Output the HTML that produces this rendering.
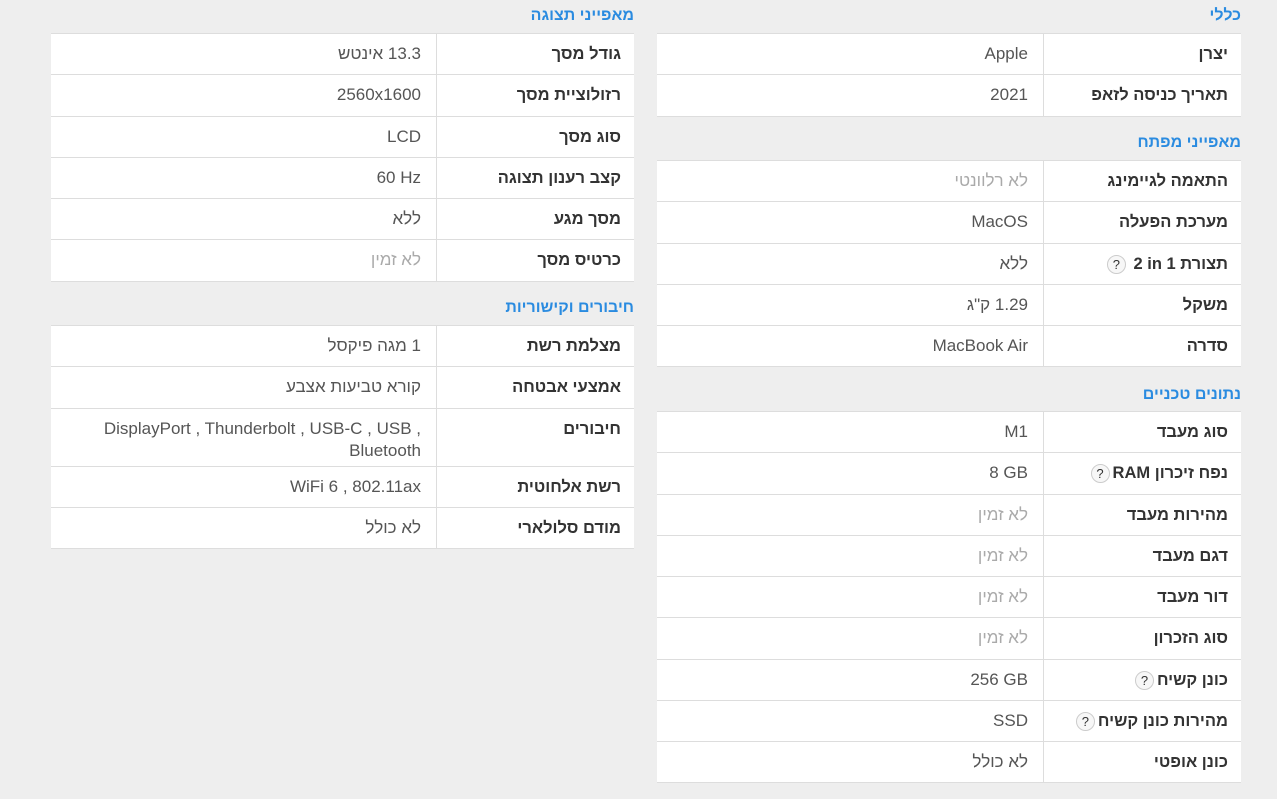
<!DOCTYPE html>
<html><head><meta charset="utf-8"><style>
body{margin:0;width:1277px;height:799px;background:#eeeeee;font-family:"Liberation Sans",Arial,sans-serif;overflow:hidden;position:relative}
.h{position:absolute;color:#2a8be0;font-size:16px;font-weight:bold;text-align:right;line-height:20px}
.t{position:absolute;background:#fff;border-top:1px solid #ddd}
.r{display:flex;height:41.25px;box-sizing:border-box;border-bottom:1px solid #ddd}
.v{flex:1;direction:ltr;text-align:right;padding:9px 15px 0 0;font-size:17px;color:#555;line-height:22px;border-right:1px solid #ddd}
.l{width:197px;direction:ltr;text-align:right;padding:10px 13px 0 0;box-sizing:border-box;font-size:16.5px;font-weight:bold;color:#333;line-height:21px}
.g{color:#aaa}
.i{display:inline-block;white-space:pre}
.q{display:inline-block;width:19px;height:19px;border:1px solid #ccc;border-radius:50%;background:#f7f7f7;font-size:13px;font-weight:normal;text-align:center;line-height:17px;color:#333;vertical-align:middle;margin-right:3px;box-sizing:border-box}
</style></head><body>
<div class="h" style="left:657px;width:584px;top:6px"><span class="i">כללי</span></div>
<div class="t" style="left:657px;width:584px;top:33px">
<div class="r"><div class="v">Apple</div><div class="l"><span class="i">יצרן</span></div></div>
<div class="r"><div class="v">2021</div><div class="l"><span class="i">תאריך כניסה לזאפ</span></div></div>
</div>
<div class="h" style="left:657px;width:584px;top:133px"><span class="i">מאפייני מפתח</span></div>
<div class="t" style="left:657px;width:584px;top:160px">
<div class="r"><div class="v g"><span class="i">לא רלוונטי</span></div><div class="l"><span class="i">התאמה לגיימינג</span></div></div>
<div class="r"><div class="v">MacOS</div><div class="l"><span class="i">מערכת הפעלה</span></div></div>
<div class="r"><div class="v"><span class="i">ללא</span></div><div class="l"><span class="q">?</span> <span class="i">2 in 1 </span><span class="i">תצורת</span></div></div>
<div class="r"><div class="v"><span class="i">ק"ג</span><span class="i"> 1.29</span></div><div class="l"><span class="i">משקל</span></div></div>
<div class="r"><div class="v">MacBook Air</div><div class="l"><span class="i">סדרה</span></div></div>
</div>
<div class="h" style="left:657px;width:584px;top:385px"><span class="i">נתונים טכניים</span></div>
<div class="t" style="left:657px;width:584px;top:411px">
<div class="r"><div class="v">M1</div><div class="l"><span class="i">סוג מעבד</span></div></div>
<div class="r"><div class="v">8 GB</div><div class="l"><span class="q">?</span><span class="i">RAM </span><span class="i">נפח זיכרון</span></div></div>
<div class="r"><div class="v g"><span class="i">לא זמין</span></div><div class="l"><span class="i">מהירות מעבד</span></div></div>
<div class="r"><div class="v g"><span class="i">לא זמין</span></div><div class="l"><span class="i">דגם מעבד</span></div></div>
<div class="r"><div class="v g"><span class="i">לא זמין</span></div><div class="l"><span class="i">דור מעבד</span></div></div>
<div class="r"><div class="v g"><span class="i">לא זמין</span></div><div class="l"><span class="i">סוג הזכרון</span></div></div>
<div class="r"><div class="v">256 GB</div><div class="l"><span class="q">?</span><span class="i">כונן קשיח</span></div></div>
<div class="r"><div class="v">SSD</div><div class="l"><span class="q">?</span><span class="i">מהירות כונן קשיח</span></div></div>
<div class="r"><div class="v"><span class="i">לא כולל</span></div><div class="l"><span class="i">כונן אופטי</span></div></div>
</div>

<div class="h" style="left:51px;width:583px;top:6px"><span class="i">מאפייני תצוגה</span></div>
<div class="t" style="left:51px;width:583px;top:33px">
<div class="r"><div class="v"><span class="i">אינטש</span><span class="i"> 13.3</span></div><div class="l"><span class="i">גודל מסך</span></div></div>
<div class="r"><div class="v">2560x1600</div><div class="l"><span class="i">רזולוציית מסך</span></div></div>
<div class="r"><div class="v">LCD</div><div class="l"><span class="i">סוג מסך</span></div></div>
<div class="r"><div class="v">60 Hz</div><div class="l"><span class="i">קצב רענון תצוגה</span></div></div>
<div class="r"><div class="v"><span class="i">ללא</span></div><div class="l"><span class="i">מסך מגע</span></div></div>
<div class="r"><div class="v g"><span class="i">לא זמין</span></div><div class="l"><span class="i">כרטיס מסך</span></div></div>
</div>
<div class="h" style="left:51px;width:583px;top:298px"><span class="i">חיבורים וקישוריות</span></div>
<div class="t" style="left:51px;width:583px;top:325px">
<div class="r"><div class="v"><span class="i">מגה פיקסל</span><span class="i"> 1</span></div><div class="l"><span class="i">מצלמת רשת</span></div></div>
<div class="r"><div class="v"><span class="i">קורא טביעות אצבע</span></div><div class="l"><span class="i">אמצעי אבטחה</span></div></div>
<div class="r" style="height:58px"><div class="v">DisplayPort , Thunderbolt , USB-C , USB ,<br>Bluetooth</div><div class="l"><span class="i">חיבורים</span></div></div>
<div class="r"><div class="v">WiFi 6 , 802.11ax</div><div class="l"><span class="i">רשת אלחוטית</span></div></div>
<div class="r"><div class="v"><span class="i">לא כולל</span></div><div class="l"><span class="i">מודם סלולארי</span></div></div>
</div>
</body></html>
